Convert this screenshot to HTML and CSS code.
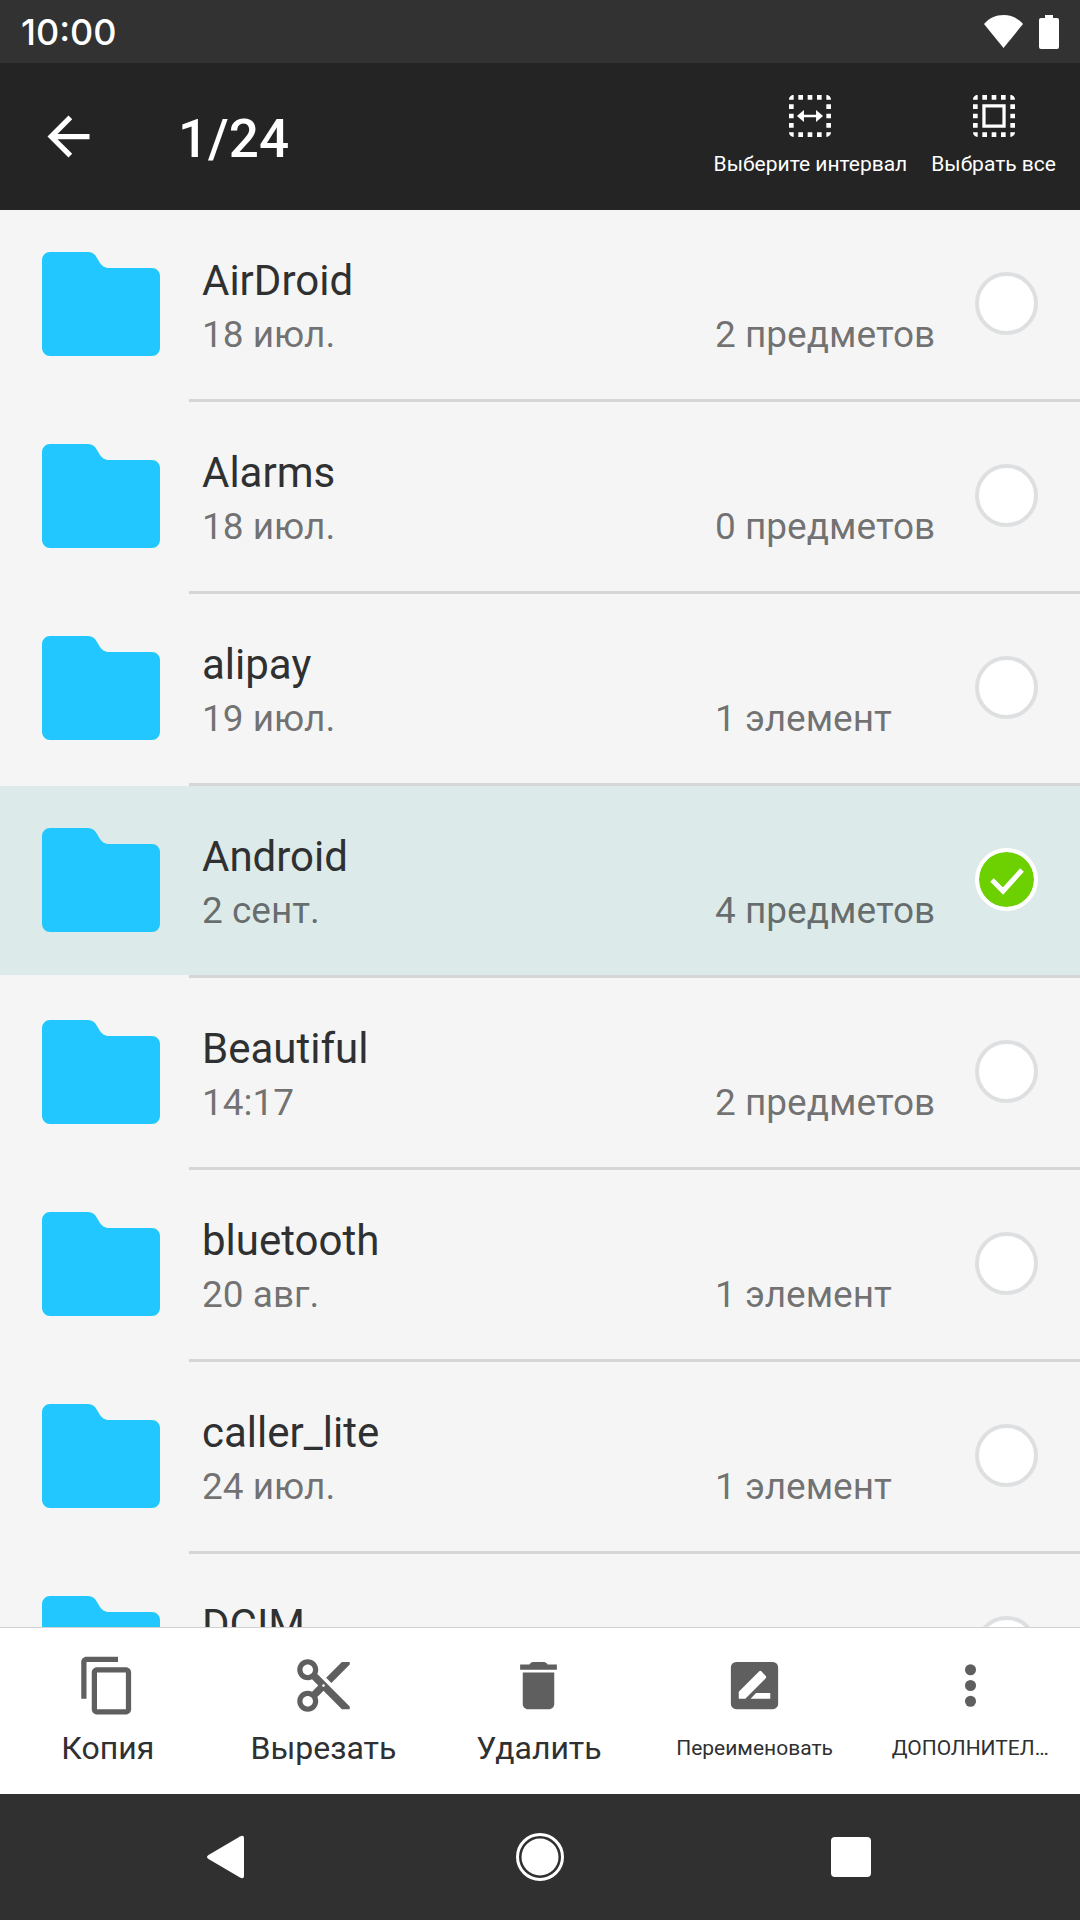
FILE: index.html
```html
<!DOCTYPE html>
<html lang="ru">
<head>
<meta charset="utf-8">
<meta name="viewport" content="width=device-width, initial-scale=1">
<title>1/24</title>
<link rel="stylesheet" href="styles.css">
</head>
<body>
<svg class="sprite" aria-hidden="true">
  <symbol id="folder" viewBox="0 0 118 104">
    <path d="M8 0H46C50 0 53 2 55 6L58 11C60 14 63 16 68 16H110A8 8 0 0 1 118 24V96A8 8 0 0 1 110 104H8A8 8 0 0 1 0 96V8A8 8 0 0 1 8 0Z"/>
  </symbol>
  <symbol id="dots-frame" viewBox="3 3 18 18">
    <path d="M3 5h2V3c-1.100 0-2 .9-2 2zm0 8h2v-2H3v2zm4 8h2v-2H7v2zM3 9h2V7H3v2zm10-6h-2v2h2V3zm6 0v2h2c0-1.100-.9-2-2-2zM5 21v-2H3c0 1.100.9 2 2 2zm-2-4h2v-2H3v2zM9 3H7v2h2V3zm2 18h2v-2h-2v2zm8-8h2v-2h-2v2zm0 8c1.100 0 2-.9 2-2h-2v2zm0-12h2V7h-2v2zm0 8h2v-2h-2v2zm-4 4h2v-2h-2v2zm0-16h2V3h-2v2z"/>
  </symbol>
</svg>

<div class="screen">
  <div class="status-bar">
    <span class="clock">10:00</span>
    <div class="status-icons">
      <svg class="wifi" viewBox="0 0 39 33" aria-hidden="true"><path d="M0 9C5 3 12 0 19.500 0S34 3 39 9L19.500 33Z"/></svg>
      <svg class="battery" viewBox="0 0 20 34" aria-hidden="true"><path d="M6 0H14V3H18A2 2 0 0 1 20 5V32A2 2 0 0 1 18 34H2A2 2 0 0 1 0 32V5A2 2 0 0 1 2 3H6Z"/></svg>
    </div>
  </div>

  <header class="toolbar">
    <button class="back" type="button" aria-label="Назад">
      <svg class="icon" viewBox="0 0 24 24"><path d="M20 11H7.830l5.590-5.590L12 4l-8 8 8 8 1.410-1.410L7.830 13H20v-2z"/></svg>
    </button>
    <h1 class="title">1/24</h1>
    <div class="toolbar-actions">
      <button class="tool" type="button">
        <svg class="tool-icon" viewBox="3 3 18 18"><use href="#dots-frame" x="3" y="3" width="18" height="18"/><path d="M6.400 12L9.400 9.400V11.450H14.600V9.400L17.600 12L14.600 14.600V12.550H9.400V14.600Z"/></svg>
        <span>Выберите интервал</span>
      </button>
      <button class="tool" type="button">
        <svg class="tool-icon" viewBox="3 3 18 18"><use href="#dots-frame" x="3" y="3" width="18" height="18"/><path fill-rule="evenodd" d="M7 17H17V7H7V17ZM8.400 8.400H15.600V15.600H8.400Z"/></svg>
        <span>Выбрать все</span>
      </button>
    </div>
  </header>

  <main class="content">
    <ul class="files">
      <li class="file"><label class="row"><svg class="folder" aria-hidden="true"><use href="#folder"/></svg><span class="info"><span class="name">AirDroid</span><span class="meta"><span class="date">18 июл.</span><span class="count">2 предметов</span></span></span><input class="check" type="checkbox"></label></li>
      <li class="file"><label class="row"><svg class="folder" aria-hidden="true"><use href="#folder"/></svg><span class="info"><span class="name">Alarms</span><span class="meta"><span class="date">18 июл.</span><span class="count">0 предметов</span></span></span><input class="check" type="checkbox"></label></li>
      <li class="file"><label class="row"><svg class="folder" aria-hidden="true"><use href="#folder"/></svg><span class="info"><span class="name">alipay</span><span class="meta"><span class="date">19 июл.</span><span class="count">1 элемент</span></span></span><input class="check" type="checkbox"></label></li>
      <li class="file"><label class="row"><svg class="folder" aria-hidden="true"><use href="#folder"/></svg><span class="info"><span class="name">Android</span><span class="meta"><span class="date">2 сент.</span><span class="count">4 предметов</span></span></span><input class="check" type="checkbox" checked></label></li>
      <li class="file"><label class="row"><svg class="folder" aria-hidden="true"><use href="#folder"/></svg><span class="info"><span class="name">Beautiful</span><span class="meta"><span class="date">14:17</span><span class="count">2 предметов</span></span></span><input class="check" type="checkbox"></label></li>
      <li class="file"><label class="row"><svg class="folder" aria-hidden="true"><use href="#folder"/></svg><span class="info"><span class="name">bluetooth</span><span class="meta"><span class="date">20 авг.</span><span class="count">1 элемент</span></span></span><input class="check" type="checkbox"></label></li>
      <li class="file"><label class="row"><svg class="folder" aria-hidden="true"><use href="#folder"/></svg><span class="info"><span class="name">caller_lite</span><span class="meta"><span class="date">24 июл.</span><span class="count">1 элемент</span></span></span><input class="check" type="checkbox"></label></li>
      <li class="file"><label class="row"><svg class="folder" aria-hidden="true"><use href="#folder"/></svg><span class="info"><span class="name">DCIM</span></span><input class="check" type="checkbox"></label></li>
    </ul>
  </main>

  <footer class="actions">
    <button class="action" type="button">
      <svg class="icon" viewBox="0 0 24 24"><path d="M16 1H4c-1.100 0-2 .9-2 2v14h2V3h12V1zm3 4H8c-1.100 0-2 .9-2 2v14c0 1.100.9 2 2 2h11c1.100 0 2-.9 2-2V7c0-1.100-.9-2-2-2zm0 16H8V7h11v14z"/></svg>
      <span class="label">Копия</span>
    </button>
    <button class="action" type="button">
      <svg class="icon" viewBox="0 0 24 24"><path d="M9.640 7.640c.23-.5.36-1.050.36-1.640 0-2.210-1.790-4-4-4S2 3.790 2 6s1.790 4 4 4c.59 0 1.140-.13 1.640-.36L10 12l-2.360 2.360C7.140 14.130 6.590 14 6 14c-2.210 0-4 1.790-4 4s1.790 4 4 4 4-1.790 4-4c0-.59-.13-1.140-.36-1.640L12 14l7 7h3v-1L9.640 7.640zM6 8c-1.100 0-2-.89-2-2s.9-2 2-2 2 .89 2 2-.9 2-2 2zm0 12c-1.100 0-2-.89-2-2s.9-2 2-2 2 .89 2 2-.9 2-2 2zm6-7.500c-.28 0-.5-.22-.5-.5s.22-.5.5-.5.5.22.5.5-.22.5-.5.5zM19 3l-6 6 2 2 7-7V3z"/></svg>
      <span class="label">Вырезать</span>
    </button>
    <button class="action" type="button">
      <svg class="icon" viewBox="0 0 24 24"><path d="M6 19c0 1.100.9 2 2 2h8c1.100 0 2-.9 2-2V7H6v12zM19 4h-3.500l-.6-.7Q14.500 3 14 3h-4Q9.500 3 9.100 3.300L8.500 4H5v2h14V4z"/></svg>
      <span class="label">Удалить</span>
    </button>
    <button class="action" type="button">
      <svg class="icon" viewBox="0 0 24 24"><path fill-rule="evenodd" d="M5 3H19A2 2 0 0 1 21 5V19A2 2 0 0 1 19 21H5A2 2 0 0 1 3 19V5A2 2 0 0 1 5 3ZM6 14.400V17H8.500L16.300 9.200Q16.600 8.800 16.300 8.400L14.600 6.600Q14.200 6.200 13.800 6.600ZM10.500 17H18V14.900H12.600Z"/></svg>
      <span class="label small">Переименовать</span>
    </button>
    <button class="action" type="button">
      <svg class="icon" viewBox="0 0 24 24"><circle cx="12" cy="6" r="2.100"/><circle cx="12" cy="12" r="2.100"/><circle cx="12" cy="18" r="2.100"/></svg>
      <span class="label small">ДОПОЛНИТЕЛ…</span>
    </button>
  </footer>

  <nav class="nav-bar">
    <button class="nav-button" type="button" aria-label="Назад"><svg class="nav-icon" viewBox="0 0 60 60"><path d="M9.500 28L41 9.400Q45 7.500 45 11V49Q45 52.500 41 50.600L9.500 32Q6.500 30 9.500 28Z"/></svg></button>
    <button class="nav-button" type="button" aria-label="Домой"><svg class="nav-icon" viewBox="0 0 60 60"><circle cx="30" cy="30" r="18.500"/><circle class="ring" cx="30" cy="30" r="22.500"/></svg></button>
    <button class="nav-button" type="button" aria-label="Обзор"><svg class="nav-icon" viewBox="0 0 60 60"><rect x="10" y="10" width="40" height="40" rx="4"/></svg></button>
  </nav>
</div>
</body>
</html>
```
FILE: styles.css
```css
* {
  box-sizing: border-box;
}

body {
  margin: 0;
  font-family: Roboto, "Liberation Sans", sans-serif;
  color: #2f3031;
  background: #f5f5f5;
}

button {
  margin: 0;
  padding: 0;
  border: 0;
  background: none;
  color: inherit;
  font: inherit;
}

svg {
  display: block;
  flex: none;
  fill: currentColor;
}

.sprite {
  display: none;
}

.screen {
  display: flex;
  flex-direction: column;
  height: 100vh;
}

/* Status bar */
.status-bar {
  display: flex;
  flex: none;
  align-items: center;
  justify-content: space-between;
  height: 63px;
  padding: 0 21px;
  color: #fff;
  background: #323232;
}

.clock {
  font: 500 36px/40px Inter, Roboto, sans-serif;
}

.status-icons {
  display: flex;
  gap: 16px;
}

.wifi {
  width: 39px;
  height: 33px;
}

.battery {
  width: 20px;
  height: 34px;
}

/* Selection toolbar */
.toolbar {
  display: flex;
  flex: none;
  align-items: center;
  height: 147px;
  padding: 0 24px 0 37px;
  color: #fff;
  background: #242424;
}

.icon {
  width: 63px;
  height: 63px;
}

.title {
  flex: 1;
  margin: 0 0 0 78px;
  padding-top: 4px;
  font-size: 53px;
  font-weight: 500;
  line-height: 64px;
}

.toolbar-actions {
  display: flex;
  gap: 24px;
  padding-bottom: 2px;
}

.tool {
  display: flex;
  flex-direction: column;
  align-items: center;
  gap: 15px;
  font-size: 21px;
  line-height: 24px;
  white-space: nowrap;
}

.tool-icon {
  width: 42px;
  height: 42px;
}

/* File list */
.content {
  flex: 1;
  min-height: 0;
  overflow-y: auto;
  scrollbar-width: none;
}

.files {
  margin: 0;
  padding: 0;
  list-style: none;
}

.file::after {
  display: block;
  height: 3px;
  margin-left: 189px;
  background: #d6d6d6;
  content: "";
}

.row {
  display: flex;
  align-items: center;
  gap: 42px;
  height: 189px;
  padding: 0 42px 2px;
}

.row:has(:checked) {
  background: #dceae9;
}

.folder {
  width: 118px;
  height: 104px;
  color: #22c7ff;
}

.info {
  display: flex;
  flex: 1;
  flex-direction: column;
  align-self: flex-start;
  gap: 2px;
  min-width: 0;
  padding-top: 45px;
  line-height: 52px;
}

.name {
  font-size: 42px;
}

.meta {
  display: flex;
  font-size: 37px;
  color: rgba(0, 0, 0, 0.55);
}

.date {
  flex: 1;
}

.count {
  width: 218px;
  white-space: nowrap;
}

.check {
  flex: none;
  width: 63px;
  height: 63px;
  margin: 0;
  border: 4px solid #dddfe0;
  border-radius: 50%;
  appearance: none;
  background: #fff;
}

.check:checked {
  border-color: #fff;
  background: #6dd000 url("data:image/svg+xml,%3Csvg xmlns='http://www.w3.org/2000/svg' viewBox='0 0 55 55'%3E%3Cpath d='M13 28l11 11L43 18' fill='none' stroke='%23fff' stroke-width='5'/%3E%3C/svg%3E") center / 55px 55px no-repeat padding-box;
}

/* Bottom actions */
.actions {
  display: flex;
  flex: none;
  padding-right: 2px;
  border-top: 1px solid #d2d2d2;
  background: #fff;
}

.action {
  display: flex;
  flex: 1 1 0;
  flex-direction: column;
  align-items: center;
  gap: 9px;
  min-width: 0;
  padding: 26px 0 24px;
}

.action .icon {
  color: #5f5f5f;
}

.label {
  font-size: 32px;
  line-height: 44px;
}

.label.small {
  font-size: 21px;
}

/* System navigation */
.nav-bar {
  display: flex;
  flex: none;
  height: 126px;
  padding: 0 74px;
  color: #fff;
  background: #303030;
}

.nav-button {
  display: flex;
  flex: 1;
  align-items: center;
  justify-content: center;
}

.nav-icon {
  width: 60px;
  height: 60px;
}

.ring {
  fill: none;
  stroke: currentColor;
  stroke-width: 3px;
}
```
